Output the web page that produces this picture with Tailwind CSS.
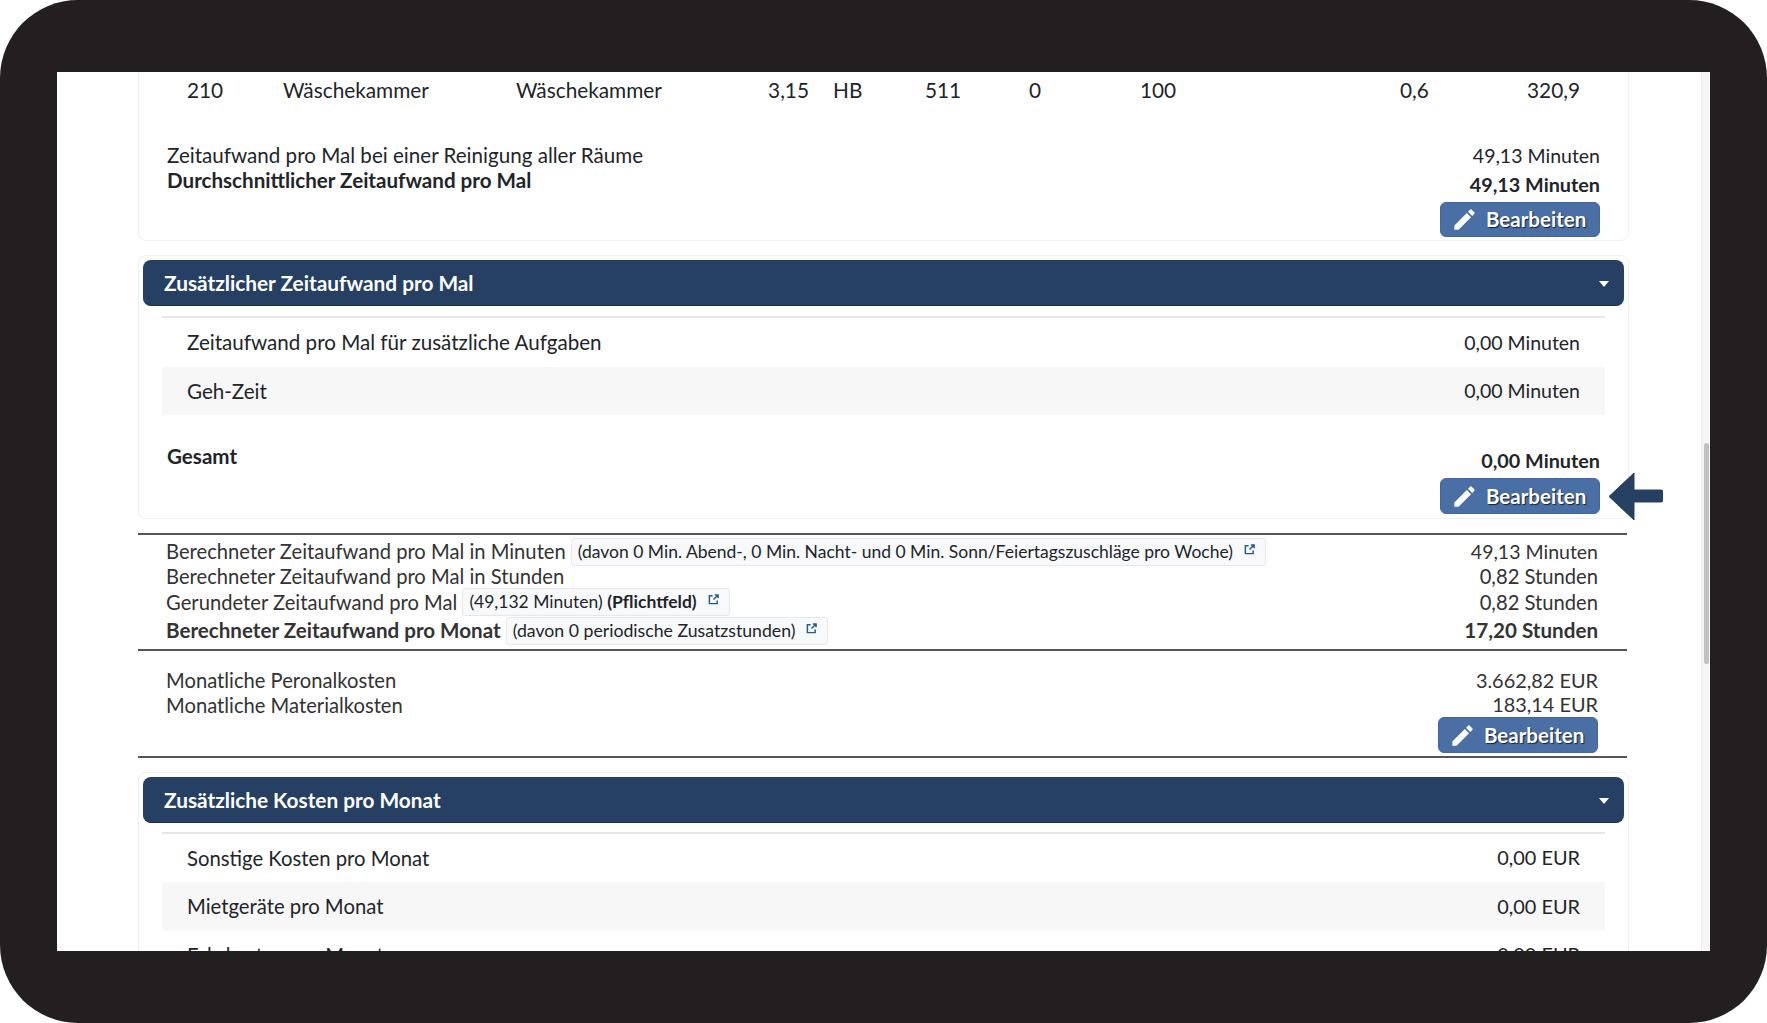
<!DOCTYPE html>
<html lang="de">

<head>
    <meta charset="UTF-8">
    <title>Zeitaufwand</title>
    <script src="https://cdn.jsdelivr.net/npm/@tailwindcss/browser@4"></script>
</head>

<body class="bg-white [font-family:Lato,sans-serif] text-[20.6px] leading-none text-[#212529]">
    <div class="w-[1767px] h-[1023px] rounded-[78px] bg-[#231f20] pt-[72px] px-[57px]">
        <div class="relative flex h-[879px] bg-white overflow-hidden">
            <main class="w-[1644px] shrink-0">

                <!-- Raeume -->
                <section class="ml-[81px] w-[1491px] h-[189px] -mt-[20px] border border-[#efefef] rounded-lg">
                    <div class="grid grid-cols-[96px_233px_150px_143px_24px_92px_104px_111px_260px_180px] items-center h-[36px] mt-[19px] pl-[48px] text-[20.8px]">
                        <span>210</span>
                        <span>Wäschekammer</span>
                        <span>Wäschekammer</span>
                        <span class="text-right">3,15</span>
                        <span></span>
                        <span>HB</span>
                        <span>511</span>
                        <span>0</span>
                        <span>100</span>
                        <span class="flex justify-between"><span>0,6</span><span>320,9</span></span>
                    </div>
                    <div class="flex justify-between mt-[35px] pl-[28px] pr-[28px]">
                        <div class="flex flex-col">
                            <span class="h-[25px] flex items-center">Zeitaufwand pro Mal bei einer Reinigung aller Räume</span>
                            <span class="h-[25px] flex items-center font-bold">Durchschnittlicher Zeitaufwand pro Mal</span>
                        </div>
                        <div class="flex flex-col items-end">
                            <span class="h-[25px] flex items-center text-[19.5px]">49,13 Minuten</span>
                            <span class="h-[33px] flex items-center font-bold text-[19.8px]">49,13 Minuten</span>
                            <button class="mt-[1px] flex items-center w-[160px] h-[35px] pl-[10px] rounded-md bg-[#4a6fa5] border border-[#4267a0] text-white font-bold text-[20.5px] [text-shadow:1px_1px_1px_#14233a]">
                                <svg class="w-[27px] h-[27px] shrink-0" viewBox="0 0 24 24" fill="currentColor"><path d="M3 17.25V21h3.75L17.81 9.94l-3.75-3.75L3 17.25zM20.71 7.04c.39-.39.39-1.02 0-1.41l-2.34-2.34c-.39-.39-1.02-.39-1.41 0l-1.83 1.83 3.75 3.75 1.83-1.83z"/></svg>
                                <span class="ml-[8px]">Bearbeiten</span>
                            </button>
                        </div>
                    </div>
                </section>

                <!-- Zusaetzlicher Zeitaufwand -->
                <section class="ml-[81px] mt-[14px] w-[1491px] h-[264px] border border-[#efefef] rounded-lg p-[4px]">
                    <div class="flex items-center justify-between h-[46px] pl-[21px] pr-[15px] pt-[2px] rounded-lg bg-[#264063] border-b border-[#1a2f4d] text-white font-bold text-[20.8px]">
                        <span>Zusätzlicher Zeitaufwand pro Mal</span>
                        <svg class="w-[10px] h-[6px]" viewBox="0 0 10 6" fill="currentColor"><path d="M0 0h10L5 6z"/></svg>
                    </div>
                    <div class="mx-[19px] mt-[10px] border-t-2 border-[#e6e6e6]">
                        <div class="flex items-center justify-between h-[49px] px-[25px]"><span>Zeitaufwand pro Mal für zusätzliche Aufgaben</span><span class="text-[19.5px]">0,00 Minuten</span></div>
                        <div class="flex items-center justify-between h-[48px] px-[25px] bg-[#f7f7f7]"><span>Geh-Zeit</span><span class="text-[19.5px]">0,00 Minuten</span></div>
                    </div>
                    <div class="flex justify-between mt-[31px] pl-[24px] pr-[24px]">
                        <span class="font-bold h-[20px] flex items-center">Gesamt</span>
                        <div class="flex flex-col items-end">
                            <span class="font-bold h-[28px] flex items-center mt-[1px] text-[19.8px]">0,00 Minuten</span>
                            <button class="mt-[3px] flex items-center w-[160px] h-[36px] pl-[10px] rounded-md bg-[#4a6fa5] border border-[#4267a0] text-white font-bold text-[20.5px] [text-shadow:1px_1px_1px_#14233a]">
                                <svg class="w-[27px] h-[27px] shrink-0" viewBox="0 0 24 24" fill="currentColor"><path d="M3 17.25V21h3.75L17.81 9.94l-3.75-3.75L3 17.25zM20.71 7.04c.39-.39.39-1.02 0-1.41l-2.34-2.34c-.39-.39-1.02-.39-1.41 0l-1.83 1.83 3.75 3.75 1.83-1.83z"/></svg>
                                <span class="ml-[8px]">Bearbeiten</span>
                            </button>
                        </div>
                    </div>
                </section>

                <!-- Berechnung -->
                <section class="ml-[81px] mt-[14px] w-[1489px] border-t-2 border-[#555555] text-[#333333] text-[20.2px]">
                    <div class="pl-[28px] pr-[29px]">
                        <div class="flex items-center justify-between h-[29px] pt-[4px]">
                            <div class="flex items-center gap-[5px]">
                                <span>Berechneter Zeitaufwand pro Mal in Minuten</span>
                                <span class="flex items-center h-[28px] pl-[6px] pr-[10px] rounded-[3px] bg-[#f8f9fb] border border-[#e6e8ec] text-[#212529] text-[17.5px]">(davon 0 Min. Abend-, 0 Min. Nacht- und 0 Min. Sonn/Feiertagszuschläge pro Woche)
                                    <svg class="ml-[11px] mb-[5px] w-[11px] h-[11px]" viewBox="0 0 12 12" fill="none" stroke="#245a92" stroke-width="1.6"><path d="M5 2H1.5v8.5H10V7M6 6l5-5M7.5 1H11v3.5"/></svg>
                                </span>
                            </div>
                            <span class="text-[19.5px]">49,13 Minuten</span>
                        </div>
                        <div class="flex items-center justify-between h-[25px]"><span>Berechneter Zeitaufwand pro Mal in Stunden</span><span>0,82 Stunden</span></div>
                        <div class="flex items-center justify-between h-[26px]">
                            <div class="flex items-center gap-[5px]">
                                <span>Gerundeter Zeitaufwand pro Mal</span>
                                <span class="flex items-center h-[28px] pl-[6px] pr-[10px] rounded-[3px] bg-[#f8f9fb] border border-[#e6e8ec] text-[#212529] text-[17.5px]">(49,132 Minuten)&nbsp;<b>(Pflichtfeld)</b>
                                    <svg class="ml-[11px] mb-[5px] w-[11px] h-[11px]" viewBox="0 0 12 12" fill="none" stroke="#245a92" stroke-width="1.6"><path d="M5 2H1.5v8.5H10V7M6 6l5-5M7.5 1H11v3.5"/></svg>
                                </span>
                            </div>
                            <span>0,82 Stunden</span>
                        </div>
                        <div class="flex items-center justify-between h-[30px] pt-[1px] font-bold text-[20.6px]">
                            <div class="flex items-center gap-[5px]">
                                <span>Berechneter Zeitaufwand pro Monat</span>
                                <span class="flex items-center h-[28px] pl-[6px] pr-[10px] rounded-[3px] bg-[#f8f9fb] border border-[#e6e8ec] text-[#212529] text-[17.7px] font-normal">(davon 0 periodische Zusatzstunden)
                                    <svg class="ml-[11px] mb-[5px] w-[11px] h-[11px]" viewBox="0 0 12 12" fill="none" stroke="#245a92" stroke-width="1.6"><path d="M5 2H1.5v8.5H10V7M6 6l5-5M7.5 1H11v3.5"/></svg>
                                </span>
                            </div>
                            <span>17,20 Stunden</span>
                        </div>
                    </div>
                    <div class="mt-[4px] border-t-2 border-[#555555] pl-[28px] pr-[29px] pt-[17px]">
                        <div class="flex items-center justify-between h-[25px]"><span>Monatliche Peronalkosten</span><span class="text-[19.9px]">3.662,82 EUR</span></div>
                        <div class="flex items-center justify-between h-[24px]"><span>Monatliche Materialkosten</span><span class="text-[19.9px]">183,14 EUR</span></div>
                        <div class="flex justify-end">
                            <button class="flex items-center w-[160px] h-[36px] pl-[10px] rounded-md bg-[#4a6fa5] border border-[#4267a0] text-white font-bold text-[20.5px] [text-shadow:1px_1px_1px_#14233a]">
                                <svg class="w-[27px] h-[27px] shrink-0" viewBox="0 0 24 24" fill="currentColor"><path d="M3 17.25V21h3.75L17.81 9.94l-3.75-3.75L3 17.25zM20.71 7.04c.39-.39.39-1.02 0-1.41l-2.34-2.34c-.39-.39-1.02-.39-1.41 0l-1.83 1.83 3.75 3.75 1.83-1.83z"/></svg>
                                <span class="ml-[8px]">Bearbeiten</span>
                            </button>
                        </div>
                    </div>
                    <div class="mt-[3px] border-t-2 border-[#555555]"></div>
                </section>

                <!-- Zusaetzliche Kosten -->
                <section class="ml-[81px] mt-[14px] w-[1491px] h-[300px] border border-[#efefef] rounded-lg p-[4px] text-[20.3px]">
                    <div class="flex items-center justify-between h-[46px] pl-[21px] pr-[15px] pt-[2px] rounded-lg bg-[#264063] border-b border-[#1a2f4d] text-white font-bold text-[20.8px]">
                        <span>Zusätzliche Kosten pro Monat</span>
                        <svg class="w-[10px] h-[6px]" viewBox="0 0 10 6" fill="currentColor"><path d="M0 0h10L5 6z"/></svg>
                    </div>
                    <div class="mx-[19px] mt-[9px] border-t-2 border-[#e6e6e6]">
                        <div class="flex items-center justify-between h-[48px] px-[25px]"><span>Sonstige Kosten pro Monat</span><span class="text-[19.9px]">0,00 EUR</span></div>
                        <div class="flex items-center justify-between h-[49px] px-[25px] bg-[#f7f7f7]"><span>Mietgeräte pro Monat</span><span class="text-[19.9px]">0,00 EUR</span></div>
                        <div class="flex items-center justify-between h-[48px] px-[25px]"><span>Fahrkosten pro Monat</span><span class="text-[19.9px]">0,00 EUR</span></div>
                    </div>
                </section>

            </main>

            <!-- Scrollbar -->
            <div class="relative w-[9px] bg-[#f7f7f7] border-l border-[#eeeeee]">
                <div class="absolute top-[371px] left-[2px] w-[5px] h-[221px] rounded-full bg-[#c1c1c1]"></div>
            </div>

            <!-- Pfeil -->
            <svg class="absolute left-[1552px] top-[401px] w-[54px] h-[47px]" viewBox="0 0 54 47" fill="#264063"><path d="M25 0v17h27a2 2 0 0 1 2 2v8a2 2 0 0 1-2 2H25v18L0 23.5z" stroke="#264063" stroke-linejoin="round"/></svg>
        </div>
    </div>
</body>

</html>
